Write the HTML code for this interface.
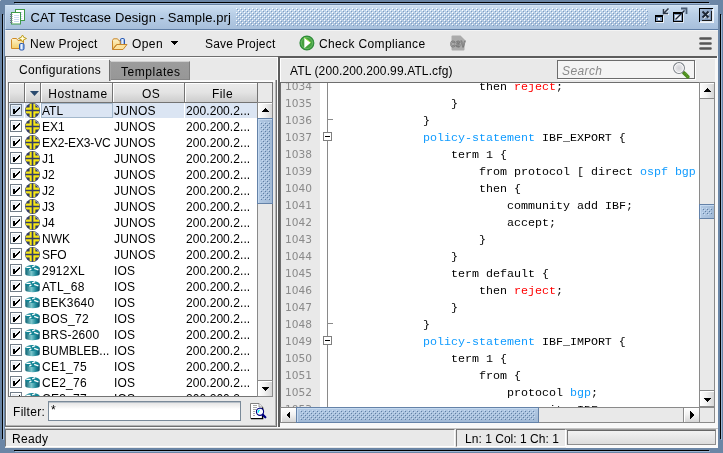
<!DOCTYPE html>
<html><head><meta charset="utf-8"><title>CAT Testcase Design - Sample.prj</title>
<style>
*{box-sizing:border-box;margin:0;padding:0}
html,body{width:723px;height:453px;overflow:hidden}
body{background:#6b86a6;font-family:"Liberation Sans",Arial,sans-serif;font-size:12px;color:#000;position:relative;letter-spacing:.4px}
.a{position:absolute}
.t{position:absolute;line-height:14px;white-space:nowrap}
.hl{position:absolute;height:1px}
.vl{position:absolute;width:1px}
#bumps{position:absolute;left:236px;top:8px;width:412px;height:18px;
 background-image:radial-gradient(circle at 0.5px 0.5px,#fff 0.6px,transparent 0.75px),radial-gradient(circle at 1.5px 1.5px,#7f9cc0 0.6px,transparent 0.75px),radial-gradient(circle at 2.5px 2.5px,#fff 0.6px,transparent 0.75px),radial-gradient(circle at 3.5px 3.5px,#7f9cc0 0.6px,transparent 0.75px);
 background-size:4px 4px}
/* table */
#hdr div{position:absolute;top:0;height:20px;border-right:1px solid #737373;border-bottom:1px solid #737373;background:linear-gradient(#ececec 0,#e3e3e3 50%,#cdcdcd 100%);text-align:center;line-height:22px;box-shadow:inset 1px 1px 0 #fff}
#tv{position:absolute;left:9px;top:103px;width:248px;height:293px;background:#fff;overflow:hidden}
.row{position:absolute;left:0;width:248px;height:16px;line-height:16px;white-space:nowrap}
.row.sel{background:#dbe5f3;height:15px}
.gl{position:absolute;top:0;width:1px;height:15px;background:#fff}
.row .cb{position:absolute;left:1px;top:1px;width:12px;height:12px;border:1px solid #717d89;background:linear-gradient(135deg,#dde4ec 0,#ffffff 75%);box-shadow:inset 1px 1px 0 #fff}
.row.sel .cb{background:linear-gradient(135deg,#bfd0e4 0,#e4ecf6 85%);box-shadow:inset 1px 1px 0 #e8f0f8}
.row .cb svg{position:absolute;left:-1px;top:-1px}
.row .ic{position:absolute;left:16px;top:-1px}
.row .c{position:absolute;top:0}
.row .h{left:33px;letter-spacing:0;width:71px;overflow:hidden;height:15px}.row .o{left:105px;letter-spacing:.2px}.row .f{left:177px;letter-spacing:.07px}
.row.sel .h{left:32px;width:72px;padding-left:0;top:0;height:15px;border:1px solid #a3b8cc;line-height:14px}
/* scrollbars */
.sbtn{position:absolute;background:linear-gradient(90deg,#ffffff 0,#f2f2f2 45%,#d6d6d6 100%);border:1px solid #8a8a8a;box-shadow:inset 1px 1px 0 #fff}
.sbtn.h{background:linear-gradient(#ffffff 0,#f2f2f2 45%,#d6d6d6 100%)}
.thumb{position:absolute;border:1px solid #6482a8;background:linear-gradient(90deg,#b2c9e4,#a2bad6);box-shadow:inset 1px 1px 0 #c6daf0}
.thumb.h{background:linear-gradient(#b2c9e4,#a2bad6)}
.thumb:after{content:"";position:absolute;left:2px;top:3px;right:2px;bottom:3px;
 background-image:radial-gradient(circle at 0.5px 0.5px,#c8dcf2 0.6px,transparent 0.75px),radial-gradient(circle at 1.5px 1.5px,#5f7fa4 0.6px,transparent 0.75px),radial-gradient(circle at 2.5px 2.5px,#c8dcf2 0.6px,transparent 0.75px),radial-gradient(circle at 3.5px 3.5px,#5f7fa4 0.6px,transparent 0.75px);background-size:4px 4px}
.thumb.h:after{left:3px;right:3px;top:2px;bottom:2px}
/* editor */
#ed{position:absolute;left:281px;top:83px;width:418px;height:324px;background:#fff;overflow:hidden;letter-spacing:0}
#gut{position:absolute;left:0;top:0;width:39px;height:324px;background:#e9e9e9}
#fl{position:absolute;left:46px;top:0;width:1px;height:324px;background:#8a8a8a}
.ln{position:absolute;left:4px;width:32px;height:17px;line-height:17px;font-family:"DejaVu Sans","Liberation Mono",monospace;font-size:10.6px;color:#8a8a8a;white-space:pre}
.cl{position:absolute;margin-top:1px;height:17px;line-height:17px;font-family:"Liberation Mono","Courier New",monospace;font-size:11.67px;white-space:pre;color:#000}
.k{color:#0f9bff}.r{color:#ff0000}
.fb{position:absolute;left:42px;width:9px;height:9px;border:1px solid #7f7f7f;background:#fff}
.fb:after{content:"";position:absolute;left:1px;top:3px;width:5px;height:1px;background:#000}
.fe{position:absolute;left:47px;width:5px;height:1px;background:#8a8a8a}
.cell{position:absolute;top:429px;height:18px;border:1px solid #777;border-right-color:#fff;border-bottom-color:#fff;background:#e9e9e9}
#root{position:absolute;left:0;top:0;width:723px;height:453px;will-change:transform}
</style></head><body><div id="root">
<!-- frame border decoration -->
<div class="hl" style="left:14px;top:2px;width:695px;background:#000"></div>
<div class="hl" style="left:15px;top:3px;width:695px;background:#9db6d4"></div>
<div class="hl" style="left:14px;top:450px;width:695px;background:#000"></div>
<div class="hl" style="left:15px;top:451px;width:695px;background:#9db6d4"></div>
<div class="vl" style="left:2px;top:14px;height:425px;background:#000"></div>
<div class="vl" style="left:3px;top:15px;height:425px;background:#9db6d4"></div>
<div class="vl" style="left:720px;top:14px;height:425px;background:#000"></div>
<div class="vl" style="left:721px;top:15px;height:425px;background:#9db6d4"></div>
<div class="a" style="left:0;top:0;width:1px;height:1px;background:#c4ced9"></div>
<!-- content bg -->
<div class="a" style="left:5px;top:5px;width:713px;height:443px;background:#e9e9e9"></div>
<!-- TITLE BAR -->
<div class="a" style="left:5px;top:5px;width:713px;height:25px;background:linear-gradient(#cbdef1 0,#b9cfe7 35%,#a7bfdb 100%);border-bottom:1px solid #5f7ea6;border-top:1px solid #d6e5f4;border-left:1px solid #c6d9ee"></div>
<svg class="a" style="left:9px;top:8px" width="18" height="18" viewBox="0 0 18 18">
 <rect x="6.500" y="1.500" width="9" height="11" fill="#fff" stroke="#3f9a4a"/>
 <path d="M8.500 4.500h5M8.500 6.500h5M8.500 8.500h5M8.500 10.500h5" stroke="#ccd8f2" stroke-width="1"/>
 <rect x="2.500" y="4.500" width="9" height="11.500" fill="#fff" stroke="#3f9a4a"/>
 <path d="M5 7.500h5M5 9.500h5M5 11.500h5M5 13.500h5" stroke="#ccd8f2" stroke-width="1"/>
 <path d="M1 6.500h2.500M1 8.500h2.500M1 10.500h2.500M1 12.500h2.500M1 14.500h2.500" stroke="#70788c" stroke-width="1"/>
</svg>
<div class="t" id="ttl" style="left:30.500px;top:10px;font-size:13px;line-height:16px;letter-spacing:.1px">CAT Testcase Design - Sample.prj</div>
<div id="bumps"></div>
<!-- iconify -->
<svg class="a" style="left:654px;top:7px" width="16" height="16" viewBox="0 0 16 16">
 <g shape-rendering="crispEdges">
 <rect x="2" y="9" width="8" height="7" fill="#fff" opacity=".75"/>
 <rect x="1" y="8" width="8" height="7" fill="#000"/>
 <rect x="2" y="10" width="6" height="4" fill="#7f99bb"/>
 <rect x="4" y="11" width="2" height="2" fill="#fff"/>
 </g>
 <path d="M15 2.500L10 7.500M10.500 3v4.500M10 7.500h5" stroke="#fff" stroke-width="1" fill="none" opacity=".8"/>
 <path d="M14.500 1.500L9.500 6.500M9.500 2v4.500h4.500" stroke="#2c3646" stroke-width="1.500" fill="none"/>
</svg>
<!-- maximize -->
<svg class="a" style="left:672px;top:7px" width="16" height="16" viewBox="0 0 16 16">
 <g shape-rendering="crispEdges">
 <rect x="2" y="6" width="10" height="10" fill="#fff" opacity=".6"/>
 <rect x="1" y="5" width="10" height="10" fill="#000"/>
 <rect x="2" y="7" width="8" height="7" fill="#7f99bb"/>
 <rect x="3" y="8" width="6" height="5" fill="#e6eef7"/>
 </g>
 <path d="M3.500 12.500L12.500 3.500" stroke="#1a2230" stroke-width="1.300"/>
 <path d="M9 1.500h5.500v5.500" stroke="#4a5c74" stroke-width="1.800" fill="none"/>
</svg>
<!-- close -->
<svg class="a" style="left:698px;top:7px" width="17" height="16" viewBox="0 0 17 16">
 <defs><linearGradient id="cg" x1="0" y1="0" x2="1" y2="1"><stop offset="0" stop-color="#a6bcd8"/><stop offset="1" stop-color="#708bb0"/></linearGradient></defs>
 <g shape-rendering="crispEdges">
 <rect x="2" y="2" width="14" height="14" fill="#fff" opacity=".8"/>
 <rect x="1" y="1" width="14" height="14" fill="#000"/>
 <rect x="2" y="2" width="12" height="12" fill="url(#cg)"/>
 <rect x="13" y="4" width="1" height="10" fill="#1a1a1a"/><rect x="4" y="13" width="10" height="1" fill="#1a1a1a"/>
 <rect x="14" y="2" width="1" height="13" fill="#dfe8f2"/><rect x="2" y="14" width="13" height="1" fill="#dfe8f2"/>
 </g>
 <path d="M5.500 5.500L11.500 11.500M11.500 5.500L5.500 11.500" stroke="#fff" stroke-width="1.400" opacity=".8"/>
 <path d="M4.500 4.500L10.500 10.500M10.500 4.500L4.500 10.500" stroke="#1c2635" stroke-width="1.900"/>
</svg>

<!-- TOOLBAR -->
<div class="hl" style="left:5px;top:30px;width:713px;background:#f4f4f4"></div>
<svg class="a" style="left:11px;top:35px" width="16" height="16" viewBox="0 0 16 16">
 <defs><linearGradient id="fg" x1="0" y1="0" x2="0" y2="1"><stop offset="0" stop-color="#fdf3cc"/><stop offset="1" stop-color="#f4cf6a"/></linearGradient>
 <linearGradient id="bg2" x1="0" x2="1"><stop offset="0" stop-color="#6f9be0"/><stop offset=".45" stop-color="#f0f6ff"/><stop offset="1" stop-color="#5f8fdc"/></linearGradient></defs>
 <path d="M0.500 13.500V4.500L1.500 3.500H5.500L7 5.500H12.500V13.500Z" fill="url(#fg)" stroke="#d08a28"/>
 <path d="M11.500 0L12.800 2.200L15.500 3.500L12.800 4.800L11.500 7L10.200 4.800L7.500 3.500L10.200 2.200Z" fill="#f7e48a" stroke="#b8981c" stroke-width=".9"/>
 <path d="M11.500 1.500v4M9.500 3.500h4" stroke="#fffbe0" stroke-width="1"/>
 <rect x="8.500" y="8.500" width="4.500" height="6.500" rx="1.300" fill="url(#bg2)" stroke="#2858b0"/>
</svg>
<div class="t" id="t1" style="left:30px;top:37px;letter-spacing:.27px">New Project</div>
<svg class="a" style="left:112px;top:35px" width="16" height="16" viewBox="0 0 16 16">
 <rect x="8.500" y="3.500" width="4" height="7" rx="1.200" fill="url(#bg2)" stroke="#2858b0"/>
 <path d="M0.500 14.500V5.500L1.500 3.800H5.500L7 5.800H8.200V9.500H4.500Z" fill="url(#fg)" stroke="#c8862a"/>
 <path d="M0.800 14.500L5 9.500H15L11 14.500Z" fill="#fbe3a0" stroke="#c8862a"/>
</svg>
<div class="t" id="t2" style="left:132px;top:37px;letter-spacing:.4px">Open</div>
<svg class="a" style="left:170px;top:41px" width="8" height="4" viewBox="0 0 8 4" shape-rendering="crispEdges"><path d="M0 0h8l-4 4z" fill="#000"/></svg>
<div class="t" id="t3" style="left:205px;top:37px;letter-spacing:.2px">Save Project</div>
<svg class="a" style="left:299px;top:35px" width="16" height="16" viewBox="0 0 16 16">
 <circle cx="7.900" cy="8" r="6.900" fill="#45a03f" stroke="#2e8b3a" stroke-width="1.200"/>
 <circle cx="7.900" cy="8" r="5.600" fill="none" stroke="#6cbf6a" stroke-width=".8"/>
 <path d="M5.300 2.600L11.900 7.600L5.300 13.200z" fill="#fff"/><path d="M5.300 2.600L11.900 7.600" stroke="#8fe03a" stroke-width="1"/>
</svg>
<div class="t" id="t4" style="left:319px;top:37px;letter-spacing:.36px">Check Compliance</div>
<svg class="a" style="left:450px;top:35px" width="16" height="16" viewBox="0 0 16 16">
 <path d="M1.500 1.500Q1.500 0.500 2.500 0.500H10.500L14.500 4.500V14.500Q14.500 15.500 13.500 15.500H2.500Q1.500 15.500 1.500 14.500Z" fill="#ababab"/>
 <text x="8" y="12" font-family="Liberation Sans,Arial,sans-serif" font-size="9.800" font-weight="bold" text-anchor="middle" fill="#cdcdcd" stroke="#767676" stroke-width=".85" textLength="15.500" lengthAdjust="spacingAndGlyphs">CSV</text>
</svg>
<svg class="a" style="left:698px;top:36px" width="16" height="16" viewBox="0 0 16 16"><path d="M2.500 2.500h10M2.500 7.500h10M2.500 12.500h10" stroke="#555" stroke-width="2.600" stroke-linecap="round"/></svg>

<!-- SPLIT PANE OUTER BEVEL -->
<div class="hl" style="left:5px;top:56px;width:712px;background:#6e6e6e"></div>
<div class="hl" style="left:6px;top:57px;width:272px;background:#fafafa"></div>
<div class="vl" style="left:5px;top:56px;height:371px;background:#6e6e6e"></div>
<div class="vl" style="left:6px;top:57px;height:369px;background:#fff"></div>
<div class="vl" style="left:717px;top:56px;height:372px;background:#fff"></div>

<!-- LEFT: tabs -->
<div class="hl" style="left:7px;top:59px;width:102px;background:#fff"></div>
<div class="vl" style="left:109px;top:60px;height:21px;background:#707070"></div>
<div class="vl" style="left:110px;top:61px;height:20px;background:#a4a4a4"></div>
<div class="t" id="t5" style="left:19px;top:63px;letter-spacing:.33px">Configurations</div>
<div class="a" style="left:111px;top:61px;width:79px;height:19px;background:linear-gradient(#9c9c9c,#979797);border-top:1px solid #d0d0d0;border-right:1px solid #7e7e7e;border-bottom:1px solid #858585"></div>
<div class="t" id="t6" style="left:121px;top:65px;letter-spacing:.55px">Templates</div>
<div class="hl" style="left:111px;top:80px;width:164px;height:2px;background:linear-gradient(#f6f6f6,#fff)"></div>
<div class="vl" style="left:275px;top:80px;height:347px;background:#b4b4b4"></div>
<div class="vl" style="left:276px;top:80px;height:347px;background:#707070"></div>
<div class="hl" style="left:6px;top:425px;width:270px;background:#b4b4b4"></div>
<div class="hl" style="left:5px;top:426px;width:272px;background:#707070"></div>
<!-- table scrollpane -->
<div class="a" style="left:8px;top:82px;width:265px;height:315px;border:1px solid #737373;background:#e9e9e9"></div>
<div id="hdr" class="a" style="left:9px;top:83px;width:248px;height:20px">
 <div style="left:0;width:16px"></div>
 <div style="left:16px;width:16px"><svg class="a" style="left:4.500px;top:8px" width="9" height="5" viewBox="0 0 9 5"><path d="M0 0h9l-4.500 5z" fill="#2a4a6e"/></svg></div>
 <div style="left:32px;width:72px;padding-left:3px;letter-spacing:.62px">Hostname</div>
 <div style="left:104px;width:72px;padding-left:5px">OS</div>
 <div style="left:176px;width:73px;padding-left:3px">File</div>
</div>
<div id="tv">
<div class="row sel" style="top:0px"><i class="gl" style="left:15px"></i><i class="gl" style="left:31px"></i><i class="gl" style="left:103px"></i><i class="gl" style="left:175px"></i><span class="cb"><svg width="12" height="12" viewBox="0 0 12 12" shape-rendering="crispEdges"><path d="M3 5h2v5h-2zM5 7h1v2h-1zM6 6h1v2h-1zM7 5h1v2h-1zM8 4h1v2h-1zM9 3h1v2h-1z" fill="#000"/></svg></span><svg class="ic" width="16" height="16" viewBox="0 0 16 16"><circle cx="7.5" cy="8.5" r="7.4" fill="#333d66"/><g fill="#f6e616" clip-path="url(#jc)"><path d="M0 7.700V5.600H4.600V1H6.700V7.700Z"/><path d="M15 7.700V5.600H10.400V1H8.300V7.700Z"/><path d="M0 9.300V11.400H4.600V16H6.700V9.300Z"/><path d="M15 9.300V11.400H10.400V16H8.300V9.300Z"/></g><path d="M9.500 2.200A6.500 6.500 0 0 1 13.600 6" stroke="#c8ccd8" stroke-width="1" fill="none" opacity=".7"/></svg><span class="c h">ATL</span><span class="c o">JUNOS</span><span class="c f">200.200.2...</span></div>
<div class="row" style="top:16px"><span class="cb"><svg width="12" height="12" viewBox="0 0 12 12" shape-rendering="crispEdges"><path d="M3 5h2v5h-2zM5 7h1v2h-1zM6 6h1v2h-1zM7 5h1v2h-1zM8 4h1v2h-1zM9 3h1v2h-1z" fill="#000"/></svg></span><svg class="ic" width="16" height="16" viewBox="0 0 16 16"><circle cx="7.5" cy="8.5" r="7.4" fill="#333d66"/><g fill="#f6e616" clip-path="url(#jc)"><path d="M0 7.700V5.600H4.600V1H6.700V7.700Z"/><path d="M15 7.700V5.600H10.400V1H8.300V7.700Z"/><path d="M0 9.300V11.400H4.600V16H6.700V9.300Z"/><path d="M15 9.300V11.400H10.400V16H8.300V9.300Z"/></g><path d="M9.500 2.200A6.500 6.500 0 0 1 13.600 6" stroke="#c8ccd8" stroke-width="1" fill="none" opacity=".7"/></svg><span class="c h">EX1</span><span class="c o">JUNOS</span><span class="c f">200.200.2...</span></div>
<div class="row" style="top:32px"><span class="cb"><svg width="12" height="12" viewBox="0 0 12 12" shape-rendering="crispEdges"><path d="M3 5h2v5h-2zM5 7h1v2h-1zM6 6h1v2h-1zM7 5h1v2h-1zM8 4h1v2h-1zM9 3h1v2h-1z" fill="#000"/></svg></span><svg class="ic" width="16" height="16" viewBox="0 0 16 16"><circle cx="7.5" cy="8.5" r="7.4" fill="#333d66"/><g fill="#f6e616" clip-path="url(#jc)"><path d="M0 7.700V5.600H4.600V1H6.700V7.700Z"/><path d="M15 7.700V5.600H10.400V1H8.300V7.700Z"/><path d="M0 9.300V11.400H4.600V16H6.700V9.300Z"/><path d="M15 9.300V11.400H10.400V16H8.300V9.300Z"/></g><path d="M9.500 2.200A6.500 6.500 0 0 1 13.600 6" stroke="#c8ccd8" stroke-width="1" fill="none" opacity=".7"/></svg><span class="c h" style="letter-spacing:-.15px">EX2-EX3-VC</span><span class="c o">JUNOS</span><span class="c f">200.200.2...</span></div>
<div class="row" style="top:48px"><span class="cb"><svg width="12" height="12" viewBox="0 0 12 12" shape-rendering="crispEdges"><path d="M3 5h2v5h-2zM5 7h1v2h-1zM6 6h1v2h-1zM7 5h1v2h-1zM8 4h1v2h-1zM9 3h1v2h-1z" fill="#000"/></svg></span><svg class="ic" width="16" height="16" viewBox="0 0 16 16"><circle cx="7.5" cy="8.5" r="7.4" fill="#333d66"/><g fill="#f6e616" clip-path="url(#jc)"><path d="M0 7.700V5.600H4.600V1H6.700V7.700Z"/><path d="M15 7.700V5.600H10.400V1H8.300V7.700Z"/><path d="M0 9.300V11.400H4.600V16H6.700V9.300Z"/><path d="M15 9.300V11.400H10.400V16H8.300V9.300Z"/></g><path d="M9.500 2.200A6.500 6.500 0 0 1 13.600 6" stroke="#c8ccd8" stroke-width="1" fill="none" opacity=".7"/></svg><span class="c h">J1</span><span class="c o">JUNOS</span><span class="c f">200.200.2...</span></div>
<div class="row" style="top:64px"><span class="cb"><svg width="12" height="12" viewBox="0 0 12 12" shape-rendering="crispEdges"><path d="M3 5h2v5h-2zM5 7h1v2h-1zM6 6h1v2h-1zM7 5h1v2h-1zM8 4h1v2h-1zM9 3h1v2h-1z" fill="#000"/></svg></span><svg class="ic" width="16" height="16" viewBox="0 0 16 16"><circle cx="7.5" cy="8.5" r="7.4" fill="#333d66"/><g fill="#f6e616" clip-path="url(#jc)"><path d="M0 7.700V5.600H4.600V1H6.700V7.700Z"/><path d="M15 7.700V5.600H10.400V1H8.300V7.700Z"/><path d="M0 9.300V11.400H4.600V16H6.700V9.300Z"/><path d="M15 9.300V11.400H10.400V16H8.300V9.300Z"/></g><path d="M9.500 2.200A6.500 6.500 0 0 1 13.600 6" stroke="#c8ccd8" stroke-width="1" fill="none" opacity=".7"/></svg><span class="c h">J2</span><span class="c o">JUNOS</span><span class="c f">200.200.2...</span></div>
<div class="row" style="top:80px"><span class="cb"><svg width="12" height="12" viewBox="0 0 12 12" shape-rendering="crispEdges"><path d="M3 5h2v5h-2zM5 7h1v2h-1zM6 6h1v2h-1zM7 5h1v2h-1zM8 4h1v2h-1zM9 3h1v2h-1z" fill="#000"/></svg></span><svg class="ic" width="16" height="16" viewBox="0 0 16 16"><circle cx="7.5" cy="8.5" r="7.4" fill="#333d66"/><g fill="#f6e616" clip-path="url(#jc)"><path d="M0 7.700V5.600H4.600V1H6.700V7.700Z"/><path d="M15 7.700V5.600H10.400V1H8.300V7.700Z"/><path d="M0 9.300V11.400H4.600V16H6.700V9.300Z"/><path d="M15 9.300V11.400H10.400V16H8.300V9.300Z"/></g><path d="M9.500 2.200A6.500 6.500 0 0 1 13.600 6" stroke="#c8ccd8" stroke-width="1" fill="none" opacity=".7"/></svg><span class="c h">J2</span><span class="c o">JUNOS</span><span class="c f">200.200.2...</span></div>
<div class="row" style="top:96px"><span class="cb"><svg width="12" height="12" viewBox="0 0 12 12" shape-rendering="crispEdges"><path d="M3 5h2v5h-2zM5 7h1v2h-1zM6 6h1v2h-1zM7 5h1v2h-1zM8 4h1v2h-1zM9 3h1v2h-1z" fill="#000"/></svg></span><svg class="ic" width="16" height="16" viewBox="0 0 16 16"><circle cx="7.5" cy="8.5" r="7.4" fill="#333d66"/><g fill="#f6e616" clip-path="url(#jc)"><path d="M0 7.700V5.600H4.600V1H6.700V7.700Z"/><path d="M15 7.700V5.600H10.400V1H8.300V7.700Z"/><path d="M0 9.300V11.400H4.600V16H6.700V9.300Z"/><path d="M15 9.300V11.400H10.400V16H8.300V9.300Z"/></g><path d="M9.500 2.200A6.500 6.500 0 0 1 13.600 6" stroke="#c8ccd8" stroke-width="1" fill="none" opacity=".7"/></svg><span class="c h">J3</span><span class="c o">JUNOS</span><span class="c f">200.200.2...</span></div>
<div class="row" style="top:112px"><span class="cb"><svg width="12" height="12" viewBox="0 0 12 12" shape-rendering="crispEdges"><path d="M3 5h2v5h-2zM5 7h1v2h-1zM6 6h1v2h-1zM7 5h1v2h-1zM8 4h1v2h-1zM9 3h1v2h-1z" fill="#000"/></svg></span><svg class="ic" width="16" height="16" viewBox="0 0 16 16"><circle cx="7.5" cy="8.5" r="7.4" fill="#333d66"/><g fill="#f6e616" clip-path="url(#jc)"><path d="M0 7.700V5.600H4.600V1H6.700V7.700Z"/><path d="M15 7.700V5.600H10.400V1H8.300V7.700Z"/><path d="M0 9.300V11.400H4.600V16H6.700V9.300Z"/><path d="M15 9.300V11.400H10.400V16H8.300V9.300Z"/></g><path d="M9.500 2.200A6.500 6.500 0 0 1 13.600 6" stroke="#c8ccd8" stroke-width="1" fill="none" opacity=".7"/></svg><span class="c h">J4</span><span class="c o">JUNOS</span><span class="c f">200.200.2...</span></div>
<div class="row" style="top:128px"><span class="cb"><svg width="12" height="12" viewBox="0 0 12 12" shape-rendering="crispEdges"><path d="M3 5h2v5h-2zM5 7h1v2h-1zM6 6h1v2h-1zM7 5h1v2h-1zM8 4h1v2h-1zM9 3h1v2h-1z" fill="#000"/></svg></span><svg class="ic" width="16" height="16" viewBox="0 0 16 16"><circle cx="7.5" cy="8.5" r="7.4" fill="#333d66"/><g fill="#f6e616" clip-path="url(#jc)"><path d="M0 7.700V5.600H4.600V1H6.700V7.700Z"/><path d="M15 7.700V5.600H10.400V1H8.300V7.700Z"/><path d="M0 9.300V11.400H4.600V16H6.700V9.300Z"/><path d="M15 9.300V11.400H10.400V16H8.300V9.300Z"/></g><path d="M9.500 2.200A6.500 6.500 0 0 1 13.600 6" stroke="#c8ccd8" stroke-width="1" fill="none" opacity=".7"/></svg><span class="c h">NWK</span><span class="c o">JUNOS</span><span class="c f">200.200.2...</span></div>
<div class="row" style="top:144px"><span class="cb"><svg width="12" height="12" viewBox="0 0 12 12" shape-rendering="crispEdges"><path d="M3 5h2v5h-2zM5 7h1v2h-1zM6 6h1v2h-1zM7 5h1v2h-1zM8 4h1v2h-1zM9 3h1v2h-1z" fill="#000"/></svg></span><svg class="ic" width="16" height="16" viewBox="0 0 16 16"><circle cx="7.5" cy="8.5" r="7.4" fill="#333d66"/><g fill="#f6e616" clip-path="url(#jc)"><path d="M0 7.700V5.600H4.600V1H6.700V7.700Z"/><path d="M15 7.700V5.600H10.400V1H8.300V7.700Z"/><path d="M0 9.300V11.400H4.600V16H6.700V9.300Z"/><path d="M15 9.300V11.400H10.400V16H8.300V9.300Z"/></g><path d="M9.500 2.200A6.500 6.500 0 0 1 13.600 6" stroke="#c8ccd8" stroke-width="1" fill="none" opacity=".7"/></svg><span class="c h">SFO</span><span class="c o">JUNOS</span><span class="c f">200.200.2...</span></div>
<div class="row" style="top:160px"><span class="cb"><svg width="12" height="12" viewBox="0 0 12 12" shape-rendering="crispEdges"><path d="M3 5h2v5h-2zM5 7h1v2h-1zM6 6h1v2h-1zM7 5h1v2h-1zM8 4h1v2h-1zM9 3h1v2h-1z" fill="#000"/></svg></span><svg class="ic" width="16" height="16" viewBox="0 0 16 16"><path d="M0.300 6V12Q0.300 13.200 2 13.600Q7.500 15 13 13.600Q14.700 13.200 14.700 12V6Z" fill="url(#rg)"/><ellipse cx="7.500" cy="6" rx="7.200" ry="3" fill="#148696"/><path d="M1.300 5.400H5.600M7.200 4.800L10.200 3.700M4.300 8.300L6.400 6.900M9.200 6.300L13.400 7.800" stroke="#fff" stroke-width="1.300" fill="none"/></svg><span class="c h" style="letter-spacing:.25px">2912XL</span><span class="c o">IOS</span><span class="c f">200.200.2...</span></div>
<div class="row" style="top:176px"><span class="cb"><svg width="12" height="12" viewBox="0 0 12 12" shape-rendering="crispEdges"><path d="M3 5h2v5h-2zM5 7h1v2h-1zM6 6h1v2h-1zM7 5h1v2h-1zM8 4h1v2h-1zM9 3h1v2h-1z" fill="#000"/></svg></span><svg class="ic" width="16" height="16" viewBox="0 0 16 16"><path d="M0.300 6V12Q0.300 13.200 2 13.600Q7.500 15 13 13.600Q14.700 13.200 14.700 12V6Z" fill="url(#rg)"/><ellipse cx="7.500" cy="6" rx="7.200" ry="3" fill="#148696"/><path d="M1.300 5.400H5.600M7.200 4.800L10.200 3.700M4.300 8.300L6.400 6.900M9.200 6.300L13.400 7.800" stroke="#fff" stroke-width="1.300" fill="none"/></svg><span class="c h" style="letter-spacing:.25px">ATL_68</span><span class="c o">IOS</span><span class="c f">200.200.2...</span></div>
<div class="row" style="top:192px"><span class="cb"><svg width="12" height="12" viewBox="0 0 12 12" shape-rendering="crispEdges"><path d="M3 5h2v5h-2zM5 7h1v2h-1zM6 6h1v2h-1zM7 5h1v2h-1zM8 4h1v2h-1zM9 3h1v2h-1z" fill="#000"/></svg></span><svg class="ic" width="16" height="16" viewBox="0 0 16 16"><path d="M0.300 6V12Q0.300 13.200 2 13.600Q7.500 15 13 13.600Q14.700 13.200 14.700 12V6Z" fill="url(#rg)"/><ellipse cx="7.500" cy="6" rx="7.200" ry="3" fill="#148696"/><path d="M1.300 5.400H5.600M7.200 4.800L10.200 3.700M4.300 8.300L6.400 6.900M9.200 6.300L13.400 7.800" stroke="#fff" stroke-width="1.300" fill="none"/></svg><span class="c h" style="letter-spacing:.25px">BEK3640</span><span class="c o">IOS</span><span class="c f">200.200.2...</span></div>
<div class="row" style="top:208px"><span class="cb"><svg width="12" height="12" viewBox="0 0 12 12" shape-rendering="crispEdges"><path d="M3 5h2v5h-2zM5 7h1v2h-1zM6 6h1v2h-1zM7 5h1v2h-1zM8 4h1v2h-1zM9 3h1v2h-1z" fill="#000"/></svg></span><svg class="ic" width="16" height="16" viewBox="0 0 16 16"><path d="M0.300 6V12Q0.300 13.200 2 13.600Q7.500 15 13 13.600Q14.700 13.200 14.700 12V6Z" fill="url(#rg)"/><ellipse cx="7.500" cy="6" rx="7.200" ry="3" fill="#148696"/><path d="M1.300 5.400H5.600M7.200 4.800L10.200 3.700M4.300 8.300L6.400 6.900M9.200 6.300L13.400 7.800" stroke="#fff" stroke-width="1.300" fill="none"/></svg><span class="c h" style="letter-spacing:.25px">BOS_72</span><span class="c o">IOS</span><span class="c f">200.200.2...</span></div>
<div class="row" style="top:224px"><span class="cb"><svg width="12" height="12" viewBox="0 0 12 12" shape-rendering="crispEdges"><path d="M3 5h2v5h-2zM5 7h1v2h-1zM6 6h1v2h-1zM7 5h1v2h-1zM8 4h1v2h-1zM9 3h1v2h-1z" fill="#000"/></svg></span><svg class="ic" width="16" height="16" viewBox="0 0 16 16"><path d="M0.300 6V12Q0.300 13.200 2 13.600Q7.500 15 13 13.600Q14.700 13.200 14.700 12V6Z" fill="url(#rg)"/><ellipse cx="7.500" cy="6" rx="7.200" ry="3" fill="#148696"/><path d="M1.300 5.400H5.600M7.200 4.800L10.200 3.700M4.300 8.300L6.400 6.900M9.200 6.300L13.400 7.800" stroke="#fff" stroke-width="1.300" fill="none"/></svg><span class="c h" style="letter-spacing:.25px">BRS-2600</span><span class="c o">IOS</span><span class="c f">200.200.2...</span></div>
<div class="row" style="top:240px"><span class="cb"><svg width="12" height="12" viewBox="0 0 12 12" shape-rendering="crispEdges"><path d="M3 5h2v5h-2zM5 7h1v2h-1zM6 6h1v2h-1zM7 5h1v2h-1zM8 4h1v2h-1zM9 3h1v2h-1z" fill="#000"/></svg></span><svg class="ic" width="16" height="16" viewBox="0 0 16 16"><path d="M0.300 6V12Q0.300 13.200 2 13.600Q7.500 15 13 13.600Q14.700 13.200 14.700 12V6Z" fill="url(#rg)"/><ellipse cx="7.500" cy="6" rx="7.200" ry="3" fill="#148696"/><path d="M1.300 5.400H5.600M7.200 4.800L10.200 3.700M4.300 8.300L6.400 6.900M9.200 6.300L13.400 7.800" stroke="#fff" stroke-width="1.300" fill="none"/></svg><span class="c h">BUMBLEB...</span><span class="c o">IOS</span><span class="c f">200.200.2...</span></div>
<div class="row" style="top:256px"><span class="cb"><svg width="12" height="12" viewBox="0 0 12 12" shape-rendering="crispEdges"><path d="M3 5h2v5h-2zM5 7h1v2h-1zM6 6h1v2h-1zM7 5h1v2h-1zM8 4h1v2h-1zM9 3h1v2h-1z" fill="#000"/></svg></span><svg class="ic" width="16" height="16" viewBox="0 0 16 16"><path d="M0.300 6V12Q0.300 13.200 2 13.600Q7.500 15 13 13.600Q14.700 13.200 14.700 12V6Z" fill="url(#rg)"/><ellipse cx="7.500" cy="6" rx="7.200" ry="3" fill="#148696"/><path d="M1.300 5.400H5.600M7.200 4.800L10.200 3.700M4.300 8.300L6.400 6.900M9.200 6.300L13.400 7.800" stroke="#fff" stroke-width="1.300" fill="none"/></svg><span class="c h" style="letter-spacing:.25px">CE1_75</span><span class="c o">IOS</span><span class="c f">200.200.2...</span></div>
<div class="row" style="top:272px"><span class="cb"><svg width="12" height="12" viewBox="0 0 12 12" shape-rendering="crispEdges"><path d="M3 5h2v5h-2zM5 7h1v2h-1zM6 6h1v2h-1zM7 5h1v2h-1zM8 4h1v2h-1zM9 3h1v2h-1z" fill="#000"/></svg></span><svg class="ic" width="16" height="16" viewBox="0 0 16 16"><path d="M0.300 6V12Q0.300 13.200 2 13.600Q7.500 15 13 13.600Q14.700 13.200 14.700 12V6Z" fill="url(#rg)"/><ellipse cx="7.500" cy="6" rx="7.200" ry="3" fill="#148696"/><path d="M1.300 5.400H5.600M7.200 4.800L10.200 3.700M4.300 8.300L6.400 6.900M9.200 6.300L13.400 7.800" stroke="#fff" stroke-width="1.300" fill="none"/></svg><span class="c h" style="letter-spacing:.25px">CE2_76</span><span class="c o">IOS</span><span class="c f">200.200.2...</span></div>
<div class="row" style="top:288px"><span class="cb"><svg width="12" height="12" viewBox="0 0 12 12" shape-rendering="crispEdges"><path d="M3 5h2v5h-2zM5 7h1v2h-1zM6 6h1v2h-1zM7 5h1v2h-1zM8 4h1v2h-1zM9 3h1v2h-1z" fill="#000"/></svg></span><svg class="ic" width="16" height="16" viewBox="0 0 16 16"><path d="M0.300 6V12Q0.300 13.200 2 13.600Q7.500 15 13 13.600Q14.700 13.200 14.700 12V6Z" fill="url(#rg)"/><ellipse cx="7.500" cy="6" rx="7.200" ry="3" fill="#148696"/><path d="M1.300 5.400H5.600M7.200 4.800L10.200 3.700M4.300 8.300L6.400 6.900M9.200 6.300L13.400 7.800" stroke="#fff" stroke-width="1.300" fill="none"/></svg><span class="c h" style="letter-spacing:.25px">CE3_77</span><span class="c o">IOS</span><span class="c f">200.200.2...</span></div>
</div>
<!-- table vscroll -->
<div class="vl" style="left:257px;top:102px;height:294px;background:#8a8a8a"></div>
<div class="sbtn" style="left:257px;top:102px;width:16px;height:17px"><svg class="a" style="left:3px;top:5px" width="8" height="4" viewBox="0 0 8 4" shape-rendering="crispEdges"><path d="M0 4h8l-4-4z" fill="#000"/></svg></div>
<div class="thumb" style="left:257px;top:118px;width:16px;height:86px"></div>
<div class="sbtn" style="left:257px;top:380px;width:16px;height:17px"><svg class="a" style="left:3px;top:6px" width="8" height="4" viewBox="0 0 8 4" shape-rendering="crispEdges"><path d="M0 0h8l-4 4z" fill="#000"/></svg></div>
<!-- filter -->
<div class="t" id="t7" style="left:13px;top:405px;letter-spacing:.3px">Filter:</div>
<div class="a" style="left:48px;top:401px;width:193px;height:20px;border:1px solid #7a8a99;background:linear-gradient(#e2e2e2 0,#fff 40%);line-height:17px;padding-left:2px;box-shadow:inset 0 1px 0 #b8c0c8">*</div>
<svg class="a" style="left:250px;top:403px" width="17" height="17" viewBox="0 0 17 17">
 <path d="M0.500 0.500H9L12.500 4V15.500H0.500Z" fill="#fff" stroke="#808080"/>
 <path d="M12.600 4.500V15.600H1" fill="none" stroke="#000" stroke-width="1.400"/>
 <path d="M9 0.500V4H12.500" fill="#f0f0f0" stroke="#808080" stroke-width=".8"/>
 <path d="M3 2.500h4M3 4.500h4M3 6.500h3M3 8.500h2M3 10.500h2M3 12.500h2" stroke="#a8a8a8"/>
 <circle cx="10" cy="8.800" r="3.600" fill="#fafcff" stroke="#000080" stroke-width="1.100"/>
 <path d="M8.300 9.800a2.200 2.200 0 0 1 1.400-2.700" stroke="#00f0ff" stroke-width="1.300" fill="none"/>
 <path d="M12.800 11.800L15.300 14.300" stroke="#000080" stroke-width="2.300" stroke-linecap="round"/>
</svg>

<!-- divider -->
<div class="vl" style="left:277px;top:58px;height:370px;background:#fff"></div>
<div class="vl" style="left:278px;top:56px;width:2px;height:371px;background:#5c5c5c"></div>
<div class="hl" style="left:278px;top:57px;width:439px;background:#5c5c5c"></div>
<div class="hl" style="left:278px;top:56px;width:439px;background:#5c5c5c"></div>
<div class="vl" style="left:280px;top:58px;height:24px;background:#fff"></div><div class="vl" style="left:280px;top:82px;height:341px;background:#6e6e6e"></div>
<div class="hl" style="left:280px;top:58px;width:437px;background:#f8f8f8"></div>

<!-- RIGHT PANEL -->
<div class="t" id="t8" style="left:290px;top:64px;letter-spacing:.12px">ATL (200.200.200.99.ATL.cfg)</div>
<div class="a" style="left:557px;top:60px;width:138px;height:19px;border:1px solid #6c6c6c;background:#f4f4f4;box-shadow:1px 1px 0 #fff"></div>
<div class="t" id="t9" style="left:562px;top:64px;font-style:italic;color:#8a8a8a">Search</div>
<svg class="a" style="left:672px;top:61px" width="18" height="18" viewBox="0 0 18 18">
 <defs><radialGradient id="lg"><stop offset="0" stop-color="#d2d2d6"/><stop offset=".7" stop-color="#e6e6e9"/><stop offset="1" stop-color="#ffffff"/></radialGradient></defs>
 <path d="M10.300 10.300L12 12" stroke="#8a8c92" stroke-width="2.200"/>
 <path d="M12 12L15.800 15.800" stroke="#4a8a1c" stroke-width="3.600" stroke-linecap="round"/>
 <path d="M12.300 13.300l1.600-1.600M13.700 14.700l1.600-1.600M15.100 16.100l1.500-1.500" stroke="#7ab840" stroke-width=".7"/>
 <circle cx="7" cy="7.100" r="5.400" fill="url(#lg)" stroke="#7e848a" stroke-width="1.200"/>
 <circle cx="7" cy="7.100" r="4.500" fill="none" stroke="#fff" stroke-width=".8" opacity=".9"/>
</svg>
<div class="hl" style="left:281px;top:82px;width:434px;background:#6e6e6e"></div>
<div id="ed">
 <div id="gut"></div><div id="fl"></div>
<div class="ln" style="top:-5px">1034</div><div class="cl" style="top:-5px;left:198px">then <span class="r">reject</span>;</div>
<div class="ln" style="top:12px">1035</div><div class="cl" style="top:12px;left:170px">}</div>
<div class="ln" style="top:29px">1036</div><div class="cl" style="top:29px;left:142px">}</div><i class="fe" style="top:36px"></i>
<div class="ln" style="top:46px">1037</div><div class="cl" style="top:46px;left:142px"><span class="k">policy-statement</span> IBF_EXPORT {</div><i class="fb" style="top:49px"></i>
<div class="ln" style="top:63px">1038</div><div class="cl" style="top:63px;left:170px">term 1 {</div>
<div class="ln" style="top:80px">1039</div><div class="cl" style="top:80px;left:198px">from protocol [ direct <span class="k">ospf</span> <span class="k">bgp</span> ]</div>
<div class="ln" style="top:97px">1040</div><div class="cl" style="top:97px;left:198px">then {</div>
<div class="ln" style="top:114px">1041</div><div class="cl" style="top:114px;left:226px">community add IBF;</div>
<div class="ln" style="top:131px">1042</div><div class="cl" style="top:131px;left:226px">accept;</div>
<div class="ln" style="top:148px">1043</div><div class="cl" style="top:148px;left:198px">}</div>
<div class="ln" style="top:165px">1044</div><div class="cl" style="top:165px;left:170px">}</div>
<div class="ln" style="top:182px">1045</div><div class="cl" style="top:182px;left:170px">term default {</div>
<div class="ln" style="top:199px">1046</div><div class="cl" style="top:199px;left:198px">then <span class="r">reject</span>;</div>
<div class="ln" style="top:216px">1047</div><div class="cl" style="top:216px;left:170px">}</div>
<div class="ln" style="top:233px">1048</div><div class="cl" style="top:233px;left:142px">}</div><i class="fe" style="top:240px"></i>
<div class="ln" style="top:250px">1049</div><div class="cl" style="top:250px;left:142px"><span class="k">policy-statement</span> IBF_IMPORT {</div><i class="fb" style="top:253px"></i>
<div class="ln" style="top:267px">1050</div><div class="cl" style="top:267px;left:170px">term 1 {</div>
<div class="ln" style="top:284px">1051</div><div class="cl" style="top:284px;left:198px">from {</div>
<div class="ln" style="top:301px">1052</div><div class="cl" style="top:301px;left:226px">protocol <span class="k">bgp</span>;</div>
<div class="ln" style="top:318px">1053</div><div class="cl" style="top:318px;left:226px">community IBF;</div>
</div>
<!-- editor vscroll -->
<div class="a" style="left:699px;top:83px;width:16px;height:324px;background:#e9e9e9;border-left:1px solid #8a8a8a;border-right:1px solid #8a8a8a"></div>
<div class="sbtn" style="left:699px;top:82px;width:16px;height:17px"><svg class="a" style="left:3px;top:5px" width="8" height="4" viewBox="0 0 8 4" shape-rendering="crispEdges"><path d="M0 4h8l-4-4z" fill="#000"/></svg></div>
<div class="thumb" style="left:699px;top:204px;width:16px;height:15px"></div>
<div class="sbtn" style="left:699px;top:390px;width:16px;height:17px"><svg class="a" style="left:3px;top:7px" width="8" height="4" viewBox="0 0 8 4" shape-rendering="crispEdges"><path d="M0 0h8l-4 4z" fill="#000"/></svg></div>
<!-- editor hscroll -->
<div class="a" style="left:281px;top:407px;width:434px;height:16px;background:#e9e9e9;border-top:1px solid #8a8a8a;border-bottom:1px solid #8a8a8a"></div>
<div class="sbtn h" style="left:280px;top:407px;width:17px;height:16px"><svg class="a" style="left:5px;top:3px" width="4" height="8" viewBox="0 0 4 8" shape-rendering="crispEdges"><path d="M4 0v8l-4-4z" fill="#000"/></svg></div>
<div class="thumb h" style="left:296px;top:407px;width:243px;height:16px"></div>
<div class="sbtn h" style="left:683px;top:407px;width:17px;height:16px"><svg class="a" style="left:6px;top:3px" width="4" height="8" viewBox="0 0 4 8" shape-rendering="crispEdges"><path d="M0 0v8l4-4z" fill="#000"/></svg></div>
<div class="vl" style="left:699px;top:407px;height:16px;background:#8a8a8a"></div>
<div class="vl" style="left:714px;top:83px;height:340px;background:#8a8a8a"></div>
<div class="a" style="left:715px;top:59px;width:3px;height:369px;background:#f8f8f8"></div>
<div class="a" style="left:277px;top:423px;width:441px;height:5px;background:#f8f8f8"></div>
<div class="vl" style="left:278px;top:423px;width:2px;height:4px;background:#5c5c5c"></div>

<!-- STATUS BAR -->
<div class="hl" style="left:5px;top:428px;width:713px;background:#c4c4c4"></div>
<div class="hl" style="left:5px;top:427px;width:713px;background:#fafafa"></div>
<div class="cell" style="left:5px;width:450px"></div>
<div class="t" id="t10" style="left:12px;top:432px;letter-spacing:.3px">Ready</div>
<div class="cell" style="left:456px;width:110px"></div>
<div class="t" id="t11" style="left:465px;top:432px;letter-spacing:.03px">Ln: 1 Col: 1 Ch: 1</div>
<div class="hl" style="left:566px;top:429px;width:152px;background:#9c9c9c"></div><div class="a" style="left:567px;top:430px;width:149px;height:15px;border:1px solid #666;border-left-color:#777;border-right-color:#8e8e8e;border-bottom-color:#8e8e8e;background:linear-gradient(#f2f2f2,#dcdcdc)"></div>
<div class="a" style="left:566px;top:445px;width:152px;height:3px;background:#fafafa"></div>
<div class="a" style="left:716px;top:429px;width:2px;height:19px;background:#fafafa"></div>
<svg width="0" height="0" style="position:absolute"><defs><clipPath id="jc"><circle cx="7.5" cy="8.5" r="6.900"/></clipPath><linearGradient id="rg" x1="0" x2="1"><stop offset="0" stop-color="#0c6272"/><stop offset=".42" stop-color="#7cc6cc"/><stop offset=".75" stop-color="#1a8696"/><stop offset="1" stop-color="#0a5068"/></linearGradient></defs></svg>
</div></body></html>
